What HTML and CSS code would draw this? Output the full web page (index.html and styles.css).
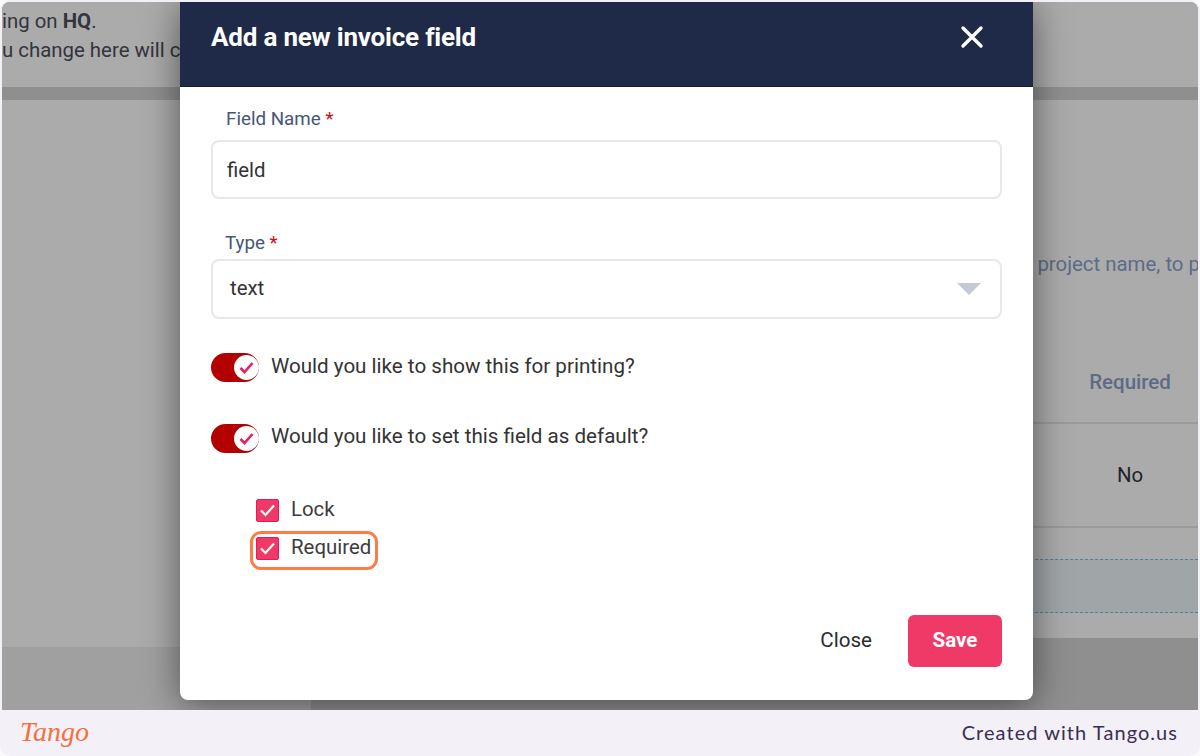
FILE: index.html
```html
<!DOCTYPE html>
<html lang="en">
<head>
<meta charset="UTF-8">
<meta name="viewport" content="width=device-width, initial-scale=1.0">
<title>Add a new invoice field</title>
<link rel="stylesheet" href="styles.css">
</head>
<body>
  <div class="shot">
    <main class="frame">
      <div class="page">
        <section class="notice">
          <p>ing on <b>HQ</b>.</p>
          <p>u change here will c</p>
        </section>
        <div class="page-row">
          <div class="side">
            <div class="side-panel"></div>
          </div>
          <div class="main">
            <div class="card">
              <p class="card-desc">r project name, to p</p>
              <div class="card-head">Required</div>
              <div class="card-cell">No</div>
              <div class="drop-zone"></div>
            </div>
          </div>
        </div>
      </div>

      <div class="modal">
        <header class="modal-head">
          <h2>Add a new invoice field</h2>
          <svg class="modal-x" width="24" height="24" viewBox="0 0 24 24"><path d="M3 3 L21 21 M21 3 L3 21" /></svg>
        </header>
        <form class="modal-body">
          <label class="field-label">Field Name <span class="req">*</span></label>
          <div class="input">field</div>

          <label class="field-label type-label">Type <span class="req">*</span></label>
          <div class="input select">
            <span class="select-value">text</span>
            <span class="caret"></span>
          </div>

          <div class="toggle-row first">
            <span class="toggle">
              <span class="thumb">
                <svg width="15" height="13" viewBox="0 0 15 13"><path d="M1.5 7 L5.5 11 L13.5 2" /></svg>
              </span>
            </span>
            <span class="row-text">Would you like to show this for printing?</span>
          </div>
          <div class="toggle-row second">
            <span class="toggle">
              <span class="thumb">
                <svg width="15" height="13" viewBox="0 0 15 13"><path d="M1.5 7 L5.5 11 L13.5 2" /></svg>
              </span>
            </span>
            <span class="row-text">Would you like to set this field as default?</span>
          </div>

          <div class="checks">
            <div class="check-row">
              <span class="box"><svg width="17" height="14" viewBox="0 0 17 14"><path d="M2 7.5 L6.5 12 L15 2.5" /></svg></span>
              <span class="row-text">Lock</span>
            </div>
            <div class="check-row marked">
              <span class="box"><svg width="17" height="14" viewBox="0 0 17 14"><path d="M2 7.5 L6.5 12 L15 2.5" /></svg></span>
              <span class="row-text">Required</span>
            </div>
          </div>

          <div class="modal-foot">
            <button type="button" class="btn-close">Close</button>
            <button type="button" class="btn-save">Save</button>
          </div>
        </form>
      </div>
    </main>
    <footer class="tango">
      <span class="tango-logo">Tango</span>
      <span class="tango-credit">Created with Tango.us</span>
    </footer>
  </div>
</body>
</html>
```

FILE: styles.css
```css
* {
  margin: 0;
  padding: 0;
  box-sizing: border-box;
}

html,
body {
  height: 756px;
  overflow: hidden;
  background-color: #fbfafd;
}

body {
  font-family: 'Roboto', sans-serif;
  color: #2f2f33;
}

.shot {
  height: 756px;
  display: flex;
  flex-direction: column;
  padding: 2px 2px 0;
  background-color: #f3f1f7;
  border-radius: 10px;
}

.frame {
  position: relative;
  height: 708px;
  overflow: hidden;
  border-radius: 8px 8px 0 0;
  background-color: #8f8f8f;
}

/* dimmed page behind the modal */
.page {
  height: 100%;
  display: flex;
  flex-direction: column;
}

.notice {
  height: 85px;
  padding-top: 5px;
  background-color: #ababab;
  font-size: 20.4px;
  line-height: 29px;
  color: #33343c;
  margin-bottom: 13px;
}

.page-row {
  flex: 1;
  display: flex;
}

.side {
  width: 309px;
  background-color: #a0a0a0;
}

.side-panel {
  height: 547px;
  background-color: #ababab;
}

.main {
  flex: 1;
  background-color: #8f8f8f;
}

.card {
  height: 538px;
  background-color: #ababab;
  padding-top: 152px;
  display: flex;
  flex-direction: column;
}

.card-desc {
  align-self: flex-end;
  margin-right: -2px;
  white-space: nowrap;
  font-size: 20.4px;
  line-height: 24px;
  color: #5d6b87;
}

.card-head {
  margin-top: 94px;
  height: 54px;
  padding-left: 751px;
  border-bottom: 2px solid #9a9a9a;
  font-size: 20.5px;
  font-weight: 500;
  line-height: 24px;
  text-align: center;
  color: #5d6b87;
}

.card-cell {
  height: 104px;
  padding-left: 751px;
  border-bottom: 2px solid #9a9a9a;
  font-size: 20.4px;
  line-height: 103px;
  text-align: center;
  color: #20222c;
}

.drop-zone {
  height: 54px;
  margin-top: 31px;
  background-color: #a0a5a8;
  border-top: 1px dashed #4d80a3;
  border-bottom: 1px dashed #4d80a3;
}

/* modal */
.modal {
  position: absolute;
  top: 0;
  left: 178px;
  width: 853px;
  background-color: #fff;
  border-radius: 0 0 8px 8px;
  box-shadow: 0 4px 36px rgba(0, 0, 0, 0.5);
}

.modal-head {
  height: 85px;
  padding: 0 49px 14px 31px;
  display: flex;
  align-items: center;
  justify-content: space-between;
  background-color: #1f2a48;
  border-bottom: 1px solid #141c3a;
  color: #fff;
}

.modal-head h2 {
  font-size: 26px;
  font-weight: 700;
  letter-spacing: -0.2px;
}

.modal-x path {
  stroke: #fff;
  stroke-width: 3.4;
  stroke-linecap: round;
  fill: none;
}

.modal-body {
  padding: 22px 31px 33px;
}

.field-label {
  display: block;
  padding-left: 15px;
  font-size: 18.8px;
  line-height: 20px;
  color: #47557a;
}

.type-label {
  margin-top: 34px;
  padding-left: 14px;
}

.req {
  color: #c70d1c;
}

.input {
  margin-top: 11px;
  height: 59px;
  padding: 0 14px;
  display: flex;
  align-items: center;
  justify-content: space-between;
  border: 2px solid #e8e8ea;
  border-radius: 8px;
  font-size: 20.4px;
  color: #333;
}

.select {
  margin-top: 6px;
  height: 60px;
  padding: 0 19px 0 17px;
}

.select-value {
  padding-bottom: 3px;
}

.caret {
  width: 0;
  height: 0;
  border-left: 12px solid transparent;
  border-right: 12px solid transparent;
  border-top: 12px solid #c4cad5;
}

.toggle-row {
  display: flex;
  align-items: center;
  gap: 12px;
  height: 30px;
  font-size: 20.6px;
  color: #333;
}

.toggle-row.first {
  margin-top: 33px;
}

.toggle-row.second {
  margin-top: 41px;
}

.row-text {
  padding-bottom: 2px;
}

.toggle-row.second .row-text {
  padding-bottom: 4px;
}

.toggle {
  width: 48px;
  height: 29px;
  padding: 2px 0 2px 23px;
  background-color: #b30000;
  border-radius: 15px;
}

.thumb {
  width: 25px;
  height: 25px;
  display: flex;
  align-items: center;
  justify-content: center;
  background-color: #fff;
  border-radius: 50%;
}

.thumb path {
  stroke: #e91e63;
  stroke-width: 2.6;
  fill: none;
}

.checks {
  margin-top: 45px;
  padding-left: 45px;
  display: flex;
  flex-direction: column;
  gap: 14px;
}

.check-row {
  position: relative;
  width: fit-content;
  height: 24px;
  display: flex;
  align-items: center;
  gap: 12px;
  font-size: 20.4px;
  color: #3c3c40;
}

.marked::after {
  content: "";
  position: absolute;
  top: -5px;
  left: -6px;
  right: -7px;
  bottom: -10px;
  border: 3.5px solid #ff7a45;
  border-radius: 11px;
}

.box {
  width: 23px;
  height: 23px;
  display: flex;
  align-items: center;
  justify-content: center;
  background-color: #ef3a68;
  border: 1px solid #e6195a;
  border-radius: 2px;
}

.box path {
  stroke: #fff;
  stroke-width: 2.2;
  fill: none;
}

.modal-foot {
  margin-top: 55px;
  display: flex;
  justify-content: flex-end;
  align-items: center;
  gap: 36px;
}

.modal-foot button {
  font-family: 'Roboto', sans-serif;
  font-size: 20.6px;
  padding-bottom: 2px;
  border: none;
  cursor: pointer;
}

.btn-close {
  background: none;
  color: #2b2b2e;
}

.btn-save {
  width: 94px;
  height: 52px;
  font-weight: 700;
  color: #fff;
  background-color: #ef3a68;
  border-radius: 6px;
}

/* tango strip */
.tango {
  height: 46px;
  padding: 0 20px 3px 18px;
  display: flex;
  align-items: center;
  justify-content: space-between;
}

.tango-logo {
  font-family: 'Liberation Serif', serif;
  font-style: italic;
  font-size: 28px;
  color: #f4703f;
}

.tango-credit {
  font-family: 'Lato', sans-serif;
  font-size: 20px;
  letter-spacing: 1.05px;
  color: #3a2f52;
}
```
